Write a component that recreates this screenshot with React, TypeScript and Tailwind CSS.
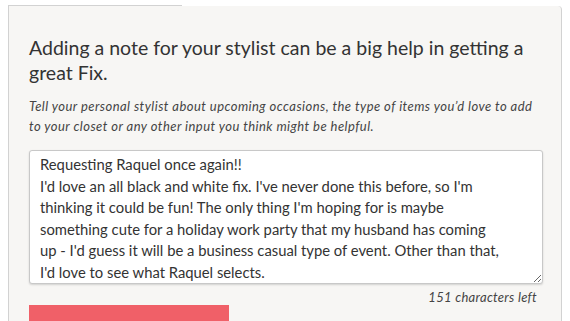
import React from "react";

const note = [
  "Requesting Raquel once again!!",
  "I'd love an all black and white fix. I've never done this before, so I'm",
  "thinking it could be fun! The only thing I'm hoping for is maybe",
  "something cute for a holiday work party that my husband has coming",
  "up - I'd guess it will be a business casual type of event. Other than that,",
  "I'd love to see what Raquel selects.",
].join("\n");

const App: React.FC = () => {
  return (
    <div className="h-[321px] w-[570px] overflow-hidden bg-white pl-2 pr-2 pt-[6px] font-['Lato',sans-serif] text-[#333]">
      <div className="relative h-[330px] rounded-tr-[4px] border-l border-r border-[#d2d2d2] bg-[#f7f6f4]">
        <div className="absolute -left-px -top-px h-px w-[174px] bg-[#d2d2d2]" />
        <div className="px-5 pt-[29px]">
          <h2 className="text-[19.5px] leading-[25px] text-[#333]">
            Adding a note for your stylist can be a big help in getting a great Fix.
          </h2>
          <p className="mt-[11px] text-[13px] italic leading-[20px] tracking-[0.45px] text-[#444]">
            Tell your personal stylist about upcoming occasions, the type of items you’d love to add
            <br />
            to your closet or any other input you think might be helpful.
          </p>
          <textarea
            readOnly
            wrap="off"
            defaultValue={note}
            className="mt-[14px] block h-[134px] w-[514px] resize-y overflow-hidden rounded-[3px] border border-[#c8c8c8] bg-white px-[10px] pt-[3px] text-[14.8px] leading-[21.5px] text-[#333] shadow-[0_1px_2px_rgba(0,0,0,0.15)] outline-none"
          />
          <div className="mt-[5px] pr-[4px] text-right text-[13px] italic leading-[16px] tracking-[0.3px] text-[#444]">
            151 characters left
          </div>
          <button className="block h-[40px] w-[200px] bg-[#f06068]" />
        </div>
      </div>
    </div>
  );
};

export default App;
